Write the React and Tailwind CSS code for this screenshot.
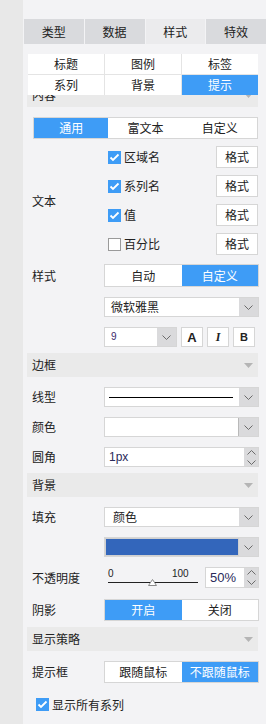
import React from "react"

const BLUE = "bg-[#3e9cf6]"

function Chevron({ up }) {
  return (
    <svg width="9" height="5" viewBox="0 0 9 5" className={up ? "rotate-180" : ""}>
      <path d="M0.5 0.5 L4.5 4.5 L8.5 0.5" fill="none" stroke="#6b6b6b" strokeWidth="1" />
    </svg>
  )
}

function Check({ on }) {
  if (!on) {
    return <div className="w-[13px] h-[13px] border border-[#9a9a9a] bg-white" />
  }
  return (
    <div className={`w-[13px] h-[13px] ${BLUE} flex items-center justify-center`}>
      <svg width="11" height="9" viewBox="0 0 11 9">
        <path d="M1.5 4.5 L4 7 L9.5 1.5" fill="none" stroke="#fff" strokeWidth="1.8" />
      </svg>
    </div>
  )
}

function Seg({ items, active, className }) {
  return (
    <div className={`flex border border-[#d6d6d6] bg-white ${className}`}>
      {items.map((t, i) => (
        <div
          key={t}
          className={`flex-1 flex items-center justify-center ${i === active ? "bg-[#3e9cf6] text-white" : ""}`}
        >
          {t}
        </div>
      ))}
    </div>
  )
}

function Select({ children, className }) {
  return (
    <div className={`flex h-[20px] border border-[#d6d6d6] bg-white ${className}`}>
      <div className="flex-1 flex items-center min-w-0">{children}</div>
      <div className="w-[19px] bg-[#dadadc] flex items-center justify-center">
        <Chevron />
      </div>
    </div>
  )
}

function Spinner() {
  return (
    <div className="w-[14px] bg-[#dadadc] flex flex-col items-center justify-center gap-[5px]">
      <Chevron up />
      <Chevron />
    </div>
  )
}

function Header({ title, className }) {
  return (
    <div className={`h-[24px] w-[231px] bg-[#eaeaea] flex items-center justify-between pl-[5px] pr-[5px] ${className}`}>
      <span>{title}</span>
      <svg width="9" height="5" viewBox="0 0 9 5">
        <path d="M0 0 L9 0 L4.5 5 Z" fill="#b5b5b5" />
      </svg>
    </div>
  )
}

function Row({ label, children, className }) {
  return (
    <div className={`flex items-center ${className}`}>
      <div className="w-[77px] pl-[5px] shrink-0">{label}</div>
      <div className="w-[155px]">{children}</div>
    </div>
  )
}

function TextRow({ on, label }) {
  return (
    <div className="flex items-center justify-between h-[22px] pl-[4px] pr-[1px]">
      <div className="flex items-center gap-[3px]">
        <Check on={on} />
        <span>{label}</span>
      </div>
      <div className="w-[42px] h-full border border-[#d6d6d6] bg-white flex items-center justify-center">
        格式
      </div>
    </div>
  )
}

export default function App() {
  const tabs = ["类型", "数据", "样式", "特效"]
  const subs = ["标题", "图例", "标签", "系列", "背景", "提示"]

  return (
    <div className="flex w-[266px] h-[724px] overflow-hidden text-[12px] leading-none text-[#222] font-['Noto_Sans_CJK_SC',sans-serif]">
      <div className="w-[23px] shrink-0 bg-[#e8e8e8]" />
      <div className="flex-1 flex flex-col bg-[#f3f3f5]">
        <div className="grid grid-cols-4 gap-px pl-px mt-[19px] h-[25px] shrink-0">
          {tabs.map((t, i) => (
            <div
              key={t}
              className={`flex items-center justify-center ${i === 2 ? "bg-[#ebebed]" : "bg-[#d9dadd]"}`}
            >
              {t}
            </div>
          ))}
        </div>

        <div className="mt-[10px] ml-[5px] w-[230px] grid grid-cols-3 gap-px bg-[#e4e4e4] shrink-0">
          {subs.map((t, i) => (
            <div
              key={t}
              className={`h-[20px] flex items-center justify-center ${i === 5 ? "bg-[#3e9cf6] text-white" : "bg-white"}`}
            >
              {t}
            </div>
          ))}
        </div>

        <div className="ml-[4px] w-[232px] flex-1 overflow-hidden flex flex-col">
          <Header title="内容" className="-mt-[12px] shrink-0" />

          <Seg items={["通用", "富文本", "自定义"]} active={0} className="mt-[10px] ml-[6px] w-[225px] h-[22px] shrink-0" />

          <Row label="文本" className="mt-[7px]">
            <div className="flex flex-col gap-[7px]">
              <TextRow on label="区域名" />
              <TextRow on label="系列名" />
              <TextRow on label="值" />
              <TextRow label="百分比" />
            </div>
          </Row>

          <Row label="样式" className="mt-[9px]">
            <Seg items={["自动", "自定义"]} active={1} className="h-[23px]" />
          </Row>

          <Row label="" className="mt-[10px]">
            <Select>
              <span className="pl-[6px]">微软雅黑</span>
            </Select>
          </Row>

          <Row label="" className="mt-[10px]">
            <div className="flex h-[20px]">
              <Select className="w-[73px]">
                <span className="pl-[6px] text-[10px] text-[#3a2a6a] font-['Liberation_Sans',sans-serif]">9</span>
              </Select>
              <div className="ml-[4px] w-[22px] border border-[#d6d6d6] bg-white flex items-center justify-center font-['Liberation_Sans',sans-serif] font-bold text-[13px]">
                A
              </div>
              <div className="ml-[4px] w-[22px] border border-[#d6d6d6] bg-white flex items-center justify-center font-['Liberation_Serif',serif] italic font-bold text-[12px]">
                I
              </div>
              <div className="ml-[4px] w-[22px] border border-[#d6d6d6] bg-white flex items-center justify-center font-['Liberation_Sans',sans-serif] font-bold text-[11px]">
                B
              </div>
            </div>
          </Row>

          <Header title="边框" className="mt-[6px] shrink-0" />

          <Row label="线型" className="mt-[10px]">
            <Select>
              <div className="ml-[4px] w-[124px] h-px bg-black" />
            </Select>
          </Row>

          <Row label="颜色" className="mt-[10px]">
            <Select>
              <div className="w-full h-full border-r border-[#b9b9b9] bg-white" />
            </Select>
          </Row>

          <Row label="圆角" className="mt-[10px]">
            <div className="flex h-[20px] border border-[#d6d6d6] bg-white">
              <div className="flex-1 flex items-center pl-[4px] text-[12px] text-[#2a2a5a] font-['Liberation_Sans',sans-serif]">1px</div>
              <Spinner />
            </div>
          </Row>

          <Header title="背景" className="mt-[6px] shrink-0" />

          <Row label="填充" className="mt-[10px]">
            <Select>
              <span className="pl-[8px]">颜色</span>
            </Select>
          </Row>

          <Row label="" className="mt-[10px]">
            <Select>
              <div className="w-full h-full p-px bg-[#d0d0d0]">
                <div className="w-full h-full bg-[#3366bb]" />
              </div>
            </Select>
          </Row>

          <Row label="不透明度" className="mt-[10px]">
            <div className="flex h-[21px] items-stretch">
              <div className="relative w-[101px]">
                <span className="absolute left-[4px] top-[2px] text-[10px] font-['Liberation_Sans',sans-serif]">0</span>
                <span className="absolute left-[68px] top-[2px] text-[10px] font-['Liberation_Sans',sans-serif]">100</span>
                <div className="absolute left-[4px] top-[15px] w-[90px] h-px bg-[#222]" />
                <svg className="absolute left-[44px] top-[12px]" width="9" height="7" viewBox="0 0 9 7">
                  <path d="M4.5 0.5 L8.5 6.5 L0.5 6.5 Z" fill="#fff" stroke="#8a8a8a" strokeWidth="1" />
                </svg>
              </div>
              <div className="flex flex-1 border border-[#d6d6d6] bg-white">
                <div className="flex-1 flex items-center pl-[4px] text-[13px] text-[#2a2a5a] font-['Liberation_Sans',sans-serif]">50%</div>
                <Spinner />
              </div>
            </div>
          </Row>

          <Row label="阴影" className="mt-[11px]">
            <Seg items={["开启", "关闭"]} active={0} className="h-[22px]" />
          </Row>

          <Header title="显示策略" className="mt-[6px] shrink-0" />

          <Row label="提示框" className="mt-[10px]">
            <Seg items={["跟随鼠标", "不跟随鼠标"]} active={1} className="h-[22px]" />
          </Row>

          <div className="mt-[15px] ml-[9px] flex items-center gap-[3px]">
            <Check on />
            <span>显示所有系列</span>
          </div>
        </div>
      </div>
    </div>
  )
}
